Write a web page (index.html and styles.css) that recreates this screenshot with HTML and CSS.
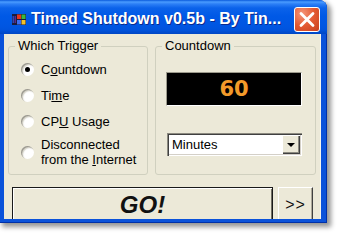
FILE: index.html
```html
<!DOCTYPE html>
<html>
<head>
<meta charset="utf-8">
<link rel="stylesheet" href="styles.css">
</head>
<body>
<div class="window">
  <div class="titlebar">
    <svg class="appicon" viewBox="0 0 14 13">
      <rect x="0" y="1" width="14" height="11" fill="#1c1c3c"/>
      <rect x="0.5" y="3" width="1.5" height="7" fill="#2c46b8"/>
      <rect x="2.5" y="3" width="1.5" height="7" fill="#5a2a8a"/>
      <rect x="5" y="1.5" width="4" height="4.5" fill="#e8361c"/>
      <rect x="9.5" y="1.5" width="4" height="4.5" fill="#3cb83c"/>
      <rect x="5" y="7" width="4" height="4.5" fill="#3b6ef0"/>
      <rect x="9.5" y="7" width="4" height="4.5" fill="#f2c22a"/>
    </svg>
    <span class="title">Timed Shutdown v0.5b - By Tin...</span>
    <button class="close" aria-label="Close">
      <svg viewBox="0 0 24 23" width="24" height="23"><path d="M6 5.5 L18 17.5 M18 5.5 L6 17.5" stroke="#fff" stroke-width="2.8" stroke-linecap="round"/></svg>
    </button>
  </div>
  <div class="client">
    <div class="groups">
      <fieldset class="group trigger">
        <legend>Which Trigger</legend>
        <div class="opts">
          <label class="opt"><span class="radio on"></span><span>C<u>o</u>untdown</span></label>
          <label class="opt"><span class="radio"></span><span>Ti<u>m</u>e</span></label>
          <label class="opt"><span class="radio"></span><span>CP<u>U</u> Usage</span></label>
          <label class="opt two"><span class="radio"></span><span>Disconnected<br>from the <u>I</u>nternet</span></label>
        </div>
      </fieldset>
      <fieldset class="group countdown">
        <legend>Countdown</legend>
        <div class="cd">
          <div class="display">60</div>
          <div class="select"><span class="value">Minutes</span><span class="arrow"><span class="tri"></span></span></div>
        </div>
      </fieldset>
    </div>
    <div class="actions">
      <button class="go">GO!</button>
      <button class="more">&gt;&gt;</button>
    </div>
  </div>
</div>
</body>
</html>
```
FILE: styles.css
```css
* { box-sizing: border-box; }
html, body { margin: 0; padding: 0; background: #fff; }
body {
  width: 340px; height: 238px; overflow: hidden;
  font-family: "Liberation Sans", Arial, sans-serif;
  font-size: 13px; color: #000;
}
.window {
  width: 327px; height: 223px;
  display: flex; flex-direction: column;
  border-radius: 0 8px 0 0;
  background: #0A52DA;
  box-shadow: inset -1px -1px 0 #0030A8, 3px 3px 5px 1px rgba(0,0,0,.42);
}
.titlebar {
  height: 34px; flex: none;
  display: flex; align-items: center;
  padding: 4px 7px 0 12px;
  border-radius: 0 8px 0 0;
  background: linear-gradient(to bottom, #0A5ADC 0px, #4A9CFF 2px, #2C7FF6 4px, #0B62EA 8px, #0059E6 16px, #0056E2 26px, #0053DC 30px, #0046C4 34px);
}
.appicon { width: 14px; height: 13px; margin-right: 5px; flex: none; }
.title {
  flex: 1; color: #fff; font-weight: bold; font-size: 16px;
  white-space: nowrap; text-shadow: 1px 1px 0 #0A2A8E;
}
.close {
  width: 26px; height: 25px; padding: 0; flex: none;
  border: 1px solid #fff; border-radius: 3px;
  background: radial-gradient(circle at 30% 25%, #F5967A 0%, #E35A33 50%, #C8401E 100%);
  display: flex; align-items: center; justify-content: center;
}
.client {
  flex: 1; margin: 0 6px 4px 4px;
  background: #ECE9D8; overflow: hidden;
  border-right: 1px solid #F6F5EE;
}
.groups { display: flex; gap: 7px; padding: 4px 4px 0 4px; }
.group {
  margin: 0; padding: 0; min-width: 0;
  border: 1px solid #D0D0BF; border-radius: 3px;
}
.trigger { width: 140px; }
.countdown { width: 161px; }
legend { margin-left: 6px; padding: 0 3px; line-height: 16px; }
.opts { padding: 2px 0 7px 12px; }
.opt { display: flex; align-items: center; gap: 7px; height: 26px; }
.opt.two { height: auto; margin-top: 3px; line-height: 15px; }
.radio {
  width: 13px; height: 13px; border-radius: 50%; flex: none;
  background: radial-gradient(circle at 65% 65%, #fff 40%, #e6e4da 100%);
  box-shadow: inset 1px 1px 0 #9c9a90, inset 2px 2px 1px #d2d0c6;
  position: relative;
}
.radio.on::after {
  content: ""; position: absolute; left: 4px; top: 4px;
  width: 5px; height: 5px; border-radius: 50%; background: #000;
}
.cd { padding: 18px 13px 0 10px; }
.display {
  height: 34px; background: #000;
  border: 1px solid; border-color: #9c9a8c #fff #fff #9c9a8c;
  color: #F39A2A; text-align: center;
  font-family: "DejaVu Sans", sans-serif; font-weight: bold; font-size: 21px;
  line-height: 32px;
}
.select {
  margin: 27px 0 0 1px; height: 23px;
  display: flex; align-items: stretch;
  background: #fff; padding: 2px;
  box-shadow: inset 1px 1px 0 #8c8a80, inset 2px 2px 0 #404040, inset -1px -1px 0 #fff, inset -2px -2px 0 #d4d0c8;
}
.value { flex: 1; padding-left: 3px; line-height: 19px; }
.arrow {
  width: 18px; flex: none; background: #ECE9D8;
  box-shadow: inset 1px 1px 0 #fff, inset -1px -1px 0 #404040, inset -2px -2px 0 #8c8a80;
  display: flex; align-items: center; justify-content: center;
}
.tri {
  width: 0; height: 0;
  border-left: 4px solid transparent; border-right: 4px solid transparent;
  border-top: 4px solid #000; margin-top: 1px;
}
.actions { display: flex; gap: 5px; padding: 12px 7px 0 8px; }
.go, .more {
  height: 40px; padding: 0 0 5px 0; margin: 0;
  background: #ECE9D8; color: #111;
  display: flex; align-items: center; justify-content: center;
  font-family: "Liberation Sans", Arial, sans-serif;
}
.go {
  flex: 1; border: 1px solid #1a1a1a;
  box-shadow: inset 1px 1px 0 #fff, inset -1px -1px 0 #716F64;
  font-size: 24px; font-weight: bold; font-style: italic;
}
.more {
  width: 35px; flex: none;
  border: 1px solid; border-color: #fff #404040 #404040 #fff;
  box-shadow: inset -1px -1px 0 #ACA899;
  font-size: 16px; letter-spacing: 1px;
}
```
